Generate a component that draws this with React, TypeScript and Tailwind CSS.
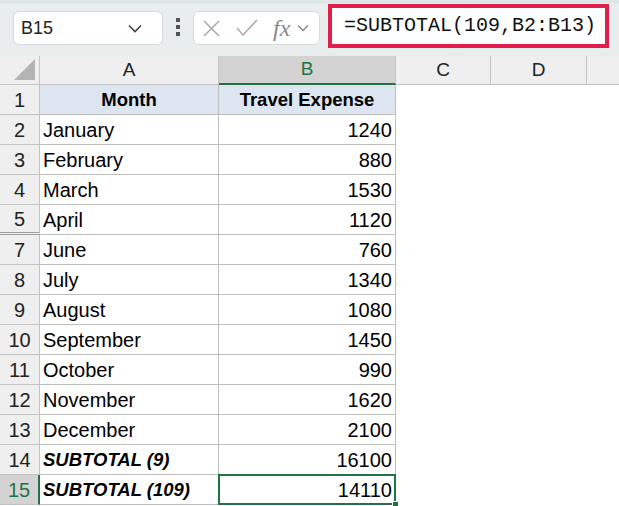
import React from 'react';

const rows: { n: number; a: string; b: string; kind?: 'head' | 'sub' }[] = [
  { n: 1, a: 'Month', b: 'Travel Expense', kind: 'head' },
  { n: 2, a: 'January', b: '1240' },
  { n: 3, a: 'February', b: '880' },
  { n: 4, a: 'March', b: '1530' },
  { n: 5, a: 'April', b: '1120' },
  { n: 7, a: 'June', b: '760' },
  { n: 8, a: 'July', b: '1340' },
  { n: 9, a: 'August', b: '1080' },
  { n: 10, a: 'September', b: '1450' },
  { n: 11, a: 'October', b: '990' },
  { n: 12, a: 'November', b: '1620' },
  { n: 13, a: 'December', b: '2100' },
  { n: 14, a: 'SUBTOTAL (9)', b: '16100', kind: 'sub' },
  { n: 15, a: 'SUBTOTAL (109)', b: '14110', kind: 'sub' },
];

function Toolbar() {
  return (
    <div className="flex items-start h-[56px] bg-[#e8eded] border-t-[3px] border-[#dfe4e4]">
      {/* name box */}
      <div className="ml-[13px] mt-[8px] w-[150px] h-[34px] rounded-[6px] border border-[#d6dada] bg-white flex items-center justify-between pl-[7px] pr-[20px]">
        <span className="text-[18px] text-[#222]">B15</span>
        <svg width="14" height="9" viewBox="0 0 14 9" fill="none" stroke="#444" strokeWidth="1.6">
          <path d="M1 1.5l6 6 6-6" />
        </svg>
      </div>

      <div className="ml-[13px] mt-[15px] flex flex-col gap-[3px]">
        <span className="w-[4px] h-[4px] bg-[#555]" />
        <span className="w-[4px] h-[4px] bg-[#555]" />
        <span className="w-[4px] h-[4px] bg-[#555]" />
      </div>

      {/* cancel / enter / fx */}
      <div className="ml-[13px] mt-[8px] w-[127px] h-[34px] rounded-[6px] border border-[#d6dada] bg-white flex items-center pl-[8px]">
        <svg width="19" height="19" viewBox="0 0 19 19" stroke="#a8a8a8" strokeWidth="1.5">
          <path d="M2 2l15 15M17 2L2 17" />
        </svg>
        <svg className="ml-[15px]" width="22" height="18" viewBox="0 0 22 18" fill="none" stroke="#a8a8a8" strokeWidth="1.5">
          <path d="M1 9l6 7L21 1" />
        </svg>
        <span className="ml-[15px] font-['Liberation_Serif',serif] italic text-[24px] leading-none text-[#888]">fx</span>
        <svg className="ml-[7px]" width="12" height="8" viewBox="0 0 12 8" fill="none" stroke="#888" strokeWidth="1.4">
          <path d="M1 1.5l5 5 5-5" />
        </svg>
      </div>

      {/* formula */}
      <div className="ml-[8px] mt-[1px] w-[281px] h-[44px] border-[4px] border-[#e01f4d] bg-white flex items-center pl-[12px]">
        <span className="font-['Liberation_Mono',monospace] text-[20px] text-[#111] leading-none">=SUBTOTAL(109,B2:B13)</span>
      </div>
    </div>
  );
}

function ColumnHeaders() {
  return (
    <div className="flex h-[29px] bg-[#efefef] text-[19px] text-[#222]">
      <div className="w-[40px] shrink-0 border-r border-b border-[#c4c4c4] relative">
        <svg className="absolute right-[4px] bottom-[4px]" width="21" height="21" viewBox="0 0 21 21">
          <path d="M21 0V21H0Z" fill="#b4b4b4" />
        </svg>
      </div>
      <div className="w-[179px] shrink-0 border-r border-b border-[#c4c4c4] flex items-center justify-center">A</div>
      <div className="w-[177px] shrink-0 border-r border-[#c4c4c4] border-b-[2px] border-b-[#217346] bg-[#d3d3d3] text-[#217346] flex items-center justify-center">B</div>
      <div className="w-[95px] shrink-0 border-r border-b border-[#c4c4c4] flex items-center justify-center">C</div>
      <div className="w-[96px] shrink-0 border-r border-b border-[#c4c4c4] flex items-center justify-center">D</div>
      <div className="flex-1 border-b border-[#c4c4c4]" />
    </div>
  );
}

function Row({ r }: { r: (typeof rows)[number] }) {
  const selected = r.n === 15;
  const before = r.n === 5;
  const head = r.kind === 'head';
  const sub = r.kind === 'sub';
  return (
    <div className="flex h-[30px] text-[20px]">
      <div
        className={
          'w-[40px] shrink-0 flex items-center justify-center ' +
          (selected
            ? 'bg-[#d3d3d3] text-[#217346] border-r-[2px] border-r-[#217346] border-b border-b-[#c4c4c4]'
            : 'bg-[#efefef] text-[#222] border-r border-r-[#c4c4c4] ') +
          (before ? 'border-b-[3px] border-double border-b-[#a0a0a0]' : selected ? '' : 'border-b border-b-[#c4c4c4]')
        }
      >
        {r.n}
      </div>
      <div
        className={
          'w-[179px] shrink-0 border-r border-b border-[#bdbdbd] flex items-center ' +
          (head ? 'bg-[#dde6f0] font-bold text-[18.5px] justify-center' : 'pl-[3px]') +
          (sub ? ' font-bold italic text-[18.5px]' : '')
        }
      >
        {r.a}
      </div>
      <div
        className={
          'w-[177px] shrink-0 flex items-center relative ' +
          (selected
            ? 'border-[2px] border-[#217346] -ml-[1px] -mt-[1px] h-[31px] w-[178px] justify-end pr-[2px]'
            : 'border-r border-b border-[#bdbdbd] ') +
          (head ? 'bg-[#dde6f0] font-bold text-[18.5px] justify-center' : selected ? '' : 'justify-end pr-[3px]')
        }
      >
        {r.b}
        {selected && (
          <span className="absolute right-[-5px] bottom-[-5px] w-[7px] h-[7px] bg-[#217346] border border-white" />
        )}
      </div>
      <div className="flex-1" />
    </div>
  );
}

export default function App() {
  return (
    <div className="w-[619px] h-[506px] overflow-hidden bg-white font-['Liberation_Sans',sans-serif] text-black">
      <Toolbar />
      <ColumnHeaders />
      {rows.map((r) => (
        <Row key={r.n} r={r} />
      ))}
    </div>
  );
}
